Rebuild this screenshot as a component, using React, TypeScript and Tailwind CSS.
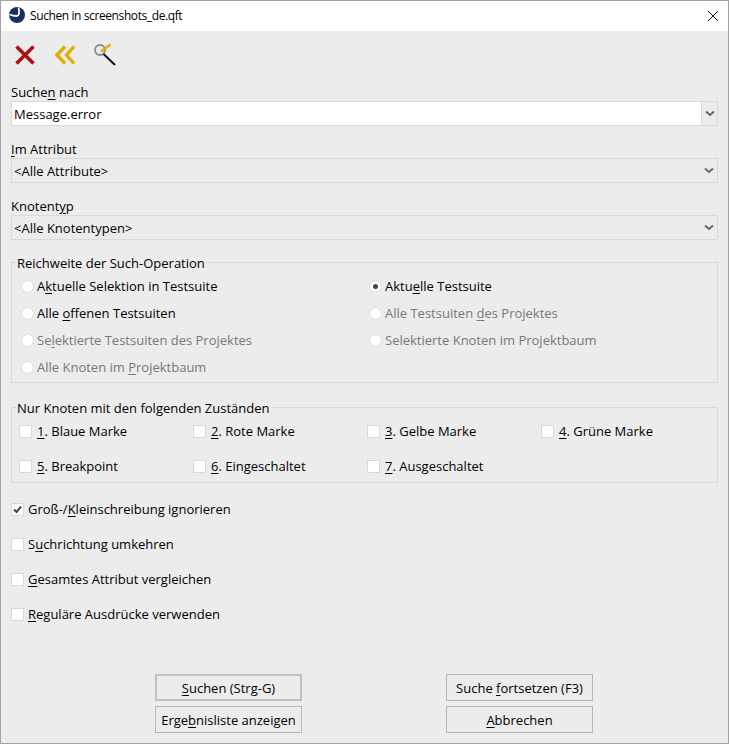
function U({ children }: { children: React.ReactNode }) {
  return <span className="underline underline-offset-2 decoration-1">{children}</span>;
}
function Radio({ label, checked, disabled }: { label: React.ReactNode; checked?: boolean; disabled?: boolean }) {
  return (
    <div className={"flex h-[27px] items-center gap-[3px] " + (disabled ? "text-[#787878]" : "text-black")}>
      <span className="flex h-[13px] w-[13px] items-center justify-center rounded-full border border-[#dcdcdc] bg-white">
        {checked && <span className="h-[5px] w-[5px] rounded-full bg-[#444444]" />}
      </span>
      <span>{label}</span>
    </div>
  );
}
function Check({ label, checked, className }: { label: React.ReactNode; checked?: boolean; className?: string }) {
  return (
    <div className={"flex h-[18px] items-center text-black " + (className ?? "")}>
      <span className="mb-[2px] flex h-[13px] w-[13px] items-center justify-center border border-[#d9d9d9] bg-white">
        {checked && (
          <svg width="11" height="11" viewBox="0 0 11 11">
            <path d="M2 5.5 L4.5 8 L9 2.5" fill="none" stroke="#444" strokeWidth="2" />
          </svg>
        )}
      </span>
      <span>{label}</span>
    </div>
  );
}
function Chevron() {
  return (
    <svg width="10" height="7" viewBox="0 0 10 7">
      <path d="M1 1.5 L5 5 L9 1.5" fill="none" stroke="#666" strokeWidth="2" />
    </svg>
  );
}
function Combo({ value, editable }: { value: string; editable?: boolean }) {
  return (
    <div className={"flex h-[25px] items-stretch border border-[#d9d9d9] " + (editable ? "bg-white" : "bg-[#ececec]")}>
      <div className="flex flex-1 items-center pl-[2px] pt-[2px] text-black">{value}</div>
      <div className={"flex w-[16px] items-center justify-center " + (editable ? "border-l border-[#d9d9d9] bg-[#ececec]" : "")}>
        <Chevron />
      </div>
    </div>
  );
}
function Field({ label, value, editable, top }: { label: React.ReactNode; value: string; editable?: boolean; top: string }) {
  return (
    <div className={top}>
      <div className="h-[19px] leading-[21px] text-black">{label}</div>
      <Combo value={value} editable={editable} />
    </div>
  );
}
function Group({ title, className, children }: { title: string; className: string; children: React.ReactNode }) {
  return (
    <div className={"relative mr-[10px] border border-[#d9d9d9] " + className}>
      <span className="absolute left-[4px] top-[-8px] bg-[#ececec] px-px leading-[16px] text-black">{title}</span>
      {children}
    </div>
  );
}
function Btn({ children, primary }: { children: React.ReactNode; primary?: boolean }) {
  return (
    <div className={"flex h-[27px] w-[147px] items-center justify-center pt-[3px] text-black " + (primary ? "border-2 border-[#c0c0c0]" : "border border-[#b8b8b8]")}>
      {children}
    </div>
  );
}
export default function App() {
  return (
    <div className="flex h-[744px] w-[729px] flex-col border border-[#a3a3a3] bg-[#ececec] text-[13px] font-['Open_Sans',sans-serif]">
      <div className="flex h-[30px] items-center justify-between bg-white pl-[8px] pr-[9px]">
        <div className="flex items-center gap-[5px]">
          <svg className="mb-[2px]" width="16" height="16" viewBox="0 0 16 16">
            <circle cx="8" cy="8" r="8" fill="#17305f" />
            <path d="M0.5 7.5 C3 8.5 6 9 8 9 C10 8.5 10.5 5 9.5 0.5" fill="none" stroke="#ffffff" strokeWidth="1.8" />
          </svg>
          <span className="text-[12px] tracking-[-0.4px] text-black">Suchen in screenshots_de.qft</span>
        </div>
        <svg width="12" height="12" viewBox="0 0 12 12">
          <path d="M1 1 L11 11 M11 1 L1 11" stroke="#111" strokeWidth="1" />
        </svg>
      </div>
      <div className="flex h-[44px] items-center gap-[18px] pl-[13px] pt-[4px]">
        <svg width="22" height="22" viewBox="0 0 22 22">
          <path d="M2.5 2.5 L19.5 19.5 M19.5 2.5 L2.5 19.5" stroke="#b00f12" strokeWidth="3.6" />
        </svg>
        <svg width="22" height="22" viewBox="0 0 22 22">
          <path d="M11 2.5 L3 11 L11 19.5 M20 2.5 L12.5 11 L20 19.5" fill="none" stroke="#e0ae00" strokeWidth="3.4" />
        </svg>
        <svg width="24" height="24" viewBox="0 0 24 24">
          <circle cx="6" cy="7" r="5" fill="#ececec" stroke="#8a8a8a" strokeWidth="1.8" />
          <path d="M7 8.5 L16.5 1.5" stroke="#e0ae00" strokeWidth="2.4" />
          <path d="M9.5 11 L21 22" stroke="#111" strokeWidth="2" />
        </svg>
      </div>
      <div className="flex flex-col pl-[10px] pr-[10px]">
        <Field top="mt-[7px]" label={<>Suche<U>n</U> nach</>} value="Message.error" editable />
        <Field top="mt-[13px]" label={<><U>I</U>m Attribut</>} value="<Alle Attribute>" />
        <Field top="mt-[13px]" label={<>Knotent<U>y</U>p</>} value="<Alle Knotentypen>" />
      </div>
      <div className="flex flex-col pl-[10px]">
        <Group title="Reichweite der Such-Operation" className="mt-[22px] h-[121px] pl-[9px] pt-[10px]">
          <div className="grid grid-cols-[348px_1fr]">
            <Radio label={<>A<U>k</U>tuelle Selektion in Testsuite</>} />
            <Radio checked label={<>Aktu<U>e</U>lle Testsuite</>} />
            <Radio label={<>Alle <U>o</U>ffenen Testsuiten</>} />
            <Radio disabled label={<>Alle Testsuiten <U>d</U>es Projektes</>} />
            <Radio disabled label={<>Se<U>l</U>ektierte Testsuiten des Projektes</>} />
            <Radio disabled label="Selektierte Knoten im Projektbaum" />
            <Radio disabled label={<>Alle Knoten im <U>P</U>rojektbaum</>} />
          </div>
        </Group>
        <Group title="Nur Knoten mit den folgenden Zuständen" className="mt-[24px] h-[76px] pl-[7px] pt-[15px]">
          <div className="grid grid-cols-[174px_174px_174px_1fr] gap-y-[17px]">
            <Check className="gap-[5px]" label={<><U>1</U>. Blaue Marke</>} />
            <Check className="gap-[5px]" label={<><U>2</U>. Rote Marke</>} />
            <Check className="gap-[5px]" label={<><U>3</U>. Gelbe Marke</>} />
            <Check className="gap-[5px]" label={<><U>4</U>. Grüne Marke</>} />
            <Check className="gap-[5px]" label={<><U>5</U>. Breakpoint</>} />
            <Check className="gap-[5px]" label={<><U>6</U>. Eingeschaltet</>} />
            <Check className="gap-[5px]" label={<><U>7</U>. Ausgeschaltet</>} />
          </div>
        </Group>
        <div className="mt-[18px] flex flex-col gap-[17px]">
          <Check className="gap-[4px]" checked label={<>Groß-/<U>K</U>leinschreibung ignorieren</>} />
          <Check className="gap-[4px]" label={<>S<U>u</U>chrichtung umkehren</>} />
          <Check className="gap-[4px]" label={<><U>G</U>esamtes Attribut vergleichen</>} />
          <Check className="gap-[4px]" label={<><U>R</U>eguläre Ausdrücke verwenden</>} />
        </div>
      </div>
      <div className="mt-[50px] grid grid-cols-[147px_147px] justify-start gap-x-[144px] gap-y-[5px] pl-[154px]">
        <Btn primary><span><U>S</U>uchen (Strg-G)</span></Btn>
        <Btn><span>Suche <U>f</U>ortsetzen (F3)</span></Btn>
        <Btn><span>Erge<U>b</U>nisliste anzeigen</span></Btn>
        <Btn><span><U>A</U>bbrechen</span></Btn>
      </div>
    </div>
  );
}
